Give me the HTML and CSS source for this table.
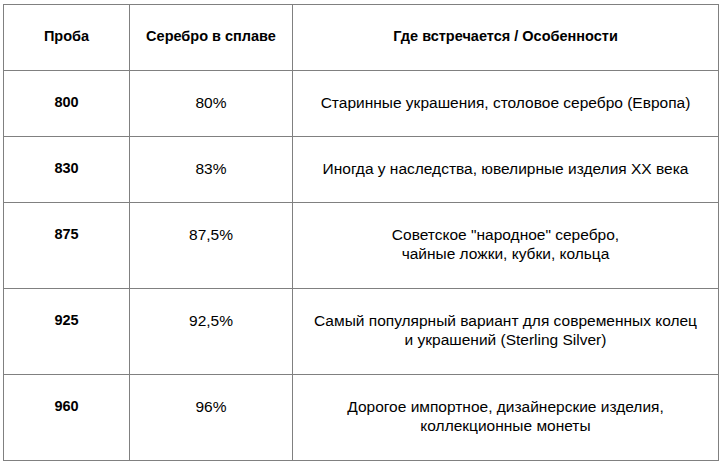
FILE: index.html
```html
<!DOCTYPE html>
<html lang="ru">
<head>
<meta charset="utf-8">
<link rel="stylesheet" href="styles.css">
</head>
<body>
<div class="wrap">
<table class="probes">
  <colgroup>
    <col class="c1"><col class="c2"><col class="c3">
  </colgroup>
  <thead>
    <tr><th>Проба</th><th>Серебро в сплаве</th><th>Где встречается / Особенности</th></tr>
  </thead>
  <tbody>
    <tr><td class="num">800</td><td>80%</td><td>Старинные украшения, столовое серебро (Европа)</td></tr>
    <tr><td class="num">830</td><td>83%</td><td>Иногда у наследства, ювелирные изделия XX века</td></tr>
    <tr class="tall"><td class="num">875</td><td>87,5%</td><td>Советское "народное" серебро,<br>чайные ложки, кубки, кольца</td></tr>
    <tr class="tall"><td class="num">925</td><td>92,5%</td><td>Самый популярный вариант для современных колец<br>и украшений (Sterling Silver)</td></tr>
    <tr class="tall"><td class="num">960</td><td>96%</td><td>Дорогое импортное, дизайнерские изделия,<br>коллекционные монеты</td></tr>
  </tbody>
</table>
</div>
</body>
</html>
```
FILE: styles.css
```css
html, body {
  margin: 0;
  padding: 0;
  background: #ffffff;
}
.wrap {
  padding: 4px 0 0 3px;
}
.probes {
  border-collapse: collapse;
  width: 715px;
  table-layout: fixed;
  font-family: "Liberation Sans", Arial, sans-serif;
  font-size: 15.5px;
  line-height: 19px;
  color: #000;
}
.c1 { width: 126px; }
.c2 { width: 163px; }
.c3 { width: 426px; }
.probes th, .probes td {
  border: 1px solid #808080;
  padding: 22px 4px 24px;
  text-align: center;
  vertical-align: top;
}
.probes .tall td { padding-bottom: 25px; }
.probes th,
.probes td.num {
  font-weight: bold;
  font-size: 14.5px;
}
```
